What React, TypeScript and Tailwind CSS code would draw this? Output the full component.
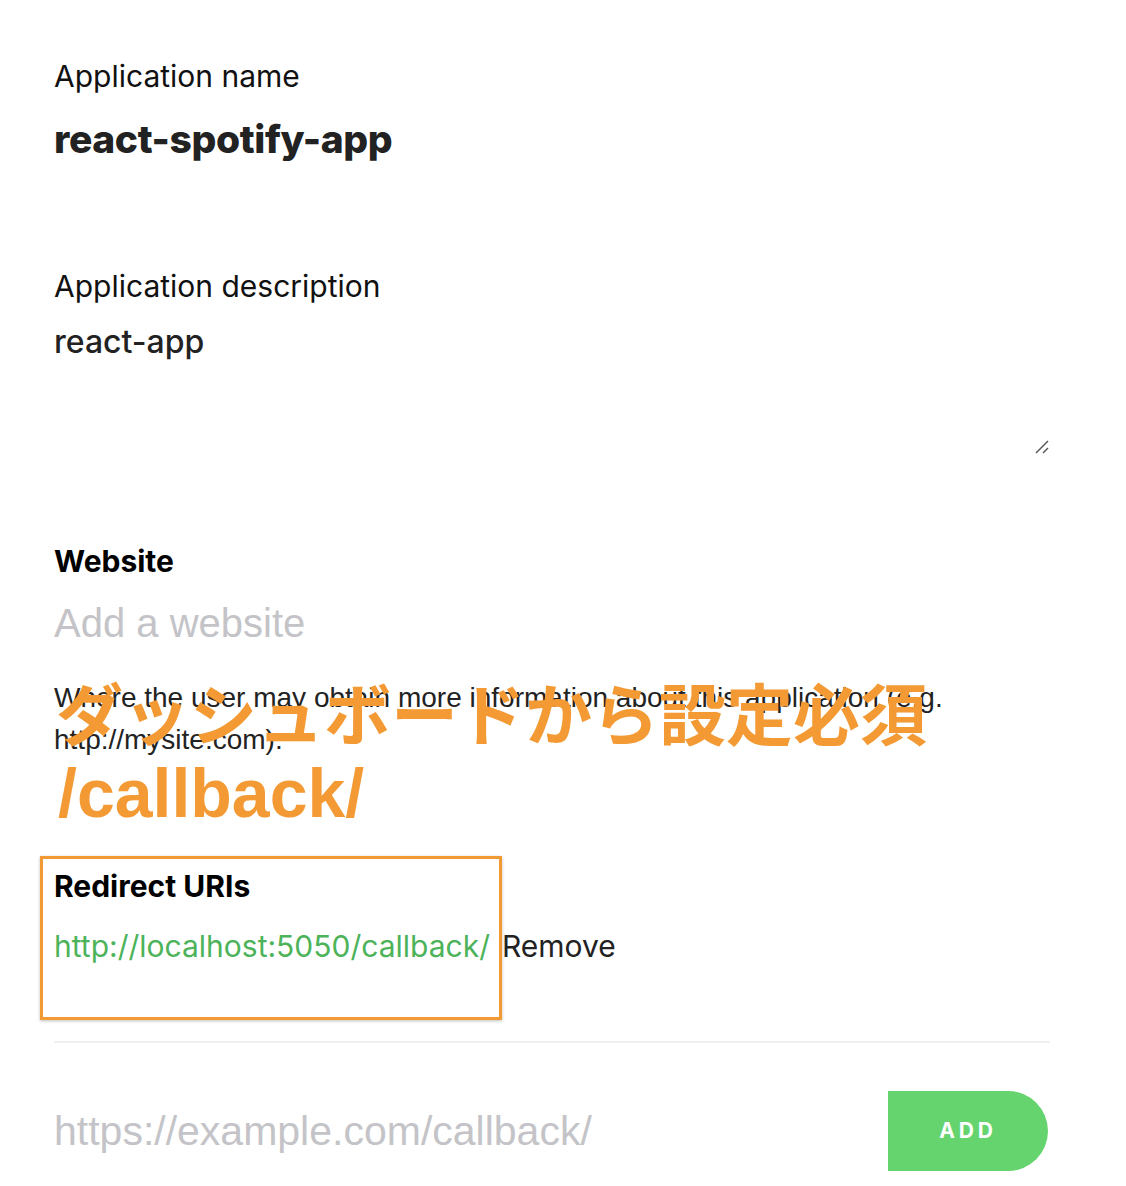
import { useState } from "react";

const sans = "font-['Inter','Noto_Sans',sans-serif]";
const helv = "font-['Liberation_Sans','Noto_Sans',sans-serif]";

function ResizeGrip() {
  return (
    <svg width="16" height="16" viewBox="0 0 16 16" className="text-[#555]">
      <line x1="2" y1="14" x2="14" y2="2" stroke="currentColor" strokeWidth="1.5" />
      <line x1="9" y1="14" x2="14" y2="9" stroke="currentColor" strokeWidth="1.5" />
    </svg>
  );
}

export default function App() {
  const [uris] = useState(["http://localhost:5050/callback/"]);

  return (
    <div className={`min-h-[1186px] w-[1126px] bg-white text-[#222] ${sans}`}>
      <div className="w-[1050px] pl-[54px] pt-[56px]">
        <section>
          <p className="text-[30px] leading-[40px] text-[#111]">Application name</p>
          <h1 className="mt-[20px] text-[39px] font-extrabold leading-[46px] tracking-[-0.01em] text-[#222]">
            react-spotify-app
          </h1>
        </section>

        <section className="mt-[104px]">
          <p className="text-[30px] leading-[40px] text-[#111]">Application description</p>
          <div className="relative mt-[16px] h-[135px]">
            <p className="text-[32px] font-medium leading-[40px] text-[#222]">react-app</p>
            <div className="absolute bottom-[2px] right-0">
              <ResizeGrip />
            </div>
          </div>
        </section>

        <section className="mt-[86px]">
          <h2 className="text-[30px] font-bold leading-[36px] text-black">Website</h2>
          <p className={`mt-[20px] text-[40px] leading-[48px] text-[#c4c4c8] ${helv}`}>Add a website</p>
          <div className="relative mt-[30px]">
            <p className={`text-[28px] leading-[42px] text-[#222] ${helv}`}>
              Where the user may obtain more information about this application (e.g.
              <br />
              http://mysite.com).
            </p>
            <div className="pointer-events-none absolute left-[2px] top-[-6px] whitespace-nowrap font-['Noto_Sans_CJK_JP',sans-serif] text-[67px] font-bold leading-[80px] text-[#f39a35]">
              ダッシュボードから設定必須
            </div>
          </div>
          <p className={`ml-[4px] mt-[-3px] text-[68px] font-bold leading-[70px] text-[#f39a35] ${helv}`}>/callback/</p>
        </section>

        <section className="relative mt-[38px]">
          <div className="pointer-events-none absolute left-[-14px] top-[-10px] h-[164px] w-[462px] border-[3px] border-[#f39a35] shadow-[0_1px_3px_rgba(0,0,0,0.25)]" />
          <h2 className="text-[30px] font-bold leading-[40px] text-black">Redirect URIs</h2>
          <ul className="mt-[20px] h-[95px]">
            {uris.map((u) => (
              <li key={u} className="flex items-baseline gap-[12px] text-[30px] leading-[40px]">
                <span className="text-[#4cb35a]">{u}</span>
                <span className="text-[#222]">Remove</span>
              </li>
            ))}
          </ul>
        </section>

        <div className="mt-[20px] h-[2px] bg-[#efefef]" />

        <div className="mt-[48px] flex items-center justify-between">
          <span className={`text-[41px] leading-[48px] text-[#c4c4c8] ${helv}`}>https://example.com/callback/</span>
          <button className="mr-[2px] flex h-[80px] w-[160px] items-center justify-center rounded-r-[40px] bg-[#65d46e] text-[21px] font-bold tracking-[0.18em] text-white">
            ADD
          </button>
        </div>
      </div>
    </div>
  );
}
